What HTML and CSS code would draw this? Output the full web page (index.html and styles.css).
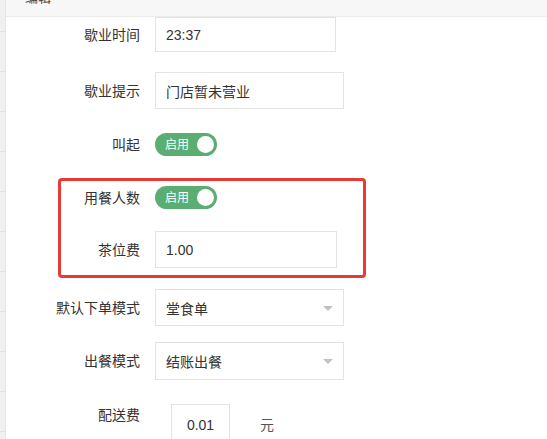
FILE: index.html
```html
<!DOCTYPE html>
<html lang="zh">
<head>
<meta charset="utf-8">
<title>编辑</title>
<link rel="stylesheet" href="styles.css">
</head>
<body>
<div class="page">
  <aside class="side"></aside>
  <main class="main">
    <header class="head"><span class="head-title">编辑</span></header>
    <div class="form">
      <div class="row r1">
        <label class="lbl">歇业时间</label>
        <div class="field w181">23:37</div>
      </div>
      <div class="row r2">
        <label class="lbl">歇业提示</label>
        <div class="field w189 h37">门店暂未营业</div>
      </div>
      <div class="row r3">
        <label class="lbl">叫起</label>
        <div class="switch"><span class="switch-text">启用</span><span class="knob"></span></div>
      </div>
      <div class="highlight">
        <div class="row r4">
          <label class="lbl lbl-in">用餐人数</label>
          <div class="switch"><span class="switch-text">启用</span><span class="knob"></span></div>
        </div>
        <div class="row r5">
          <label class="lbl lbl-in">茶位费</label>
          <div class="field w182 h37">1.00</div>
        </div>
      </div>
      <div class="row r6">
        <label class="lbl">默认下单模式</label>
        <div class="field select w189 h37">堂食单<span class="caret"></span></div>
      </div>
      <div class="row r7">
        <label class="lbl">出餐模式</label>
        <div class="field select w189 h38">结账出餐<span class="caret"></span></div>
      </div>
      <div class="row r8">
        <label class="lbl lbl-top">配送费</label>
        <div class="field small">0.01</div>
        <span class="unit">元</span>
      </div>
    </div>
  </main>
</div>
</body>
</html>
```
FILE: styles.css
```css
html, body {
  margin: 0;
  padding: 0;
  background: #ffffff;
  height: 100%;
  overflow: hidden;
}
body {
  font-family: "Liberation Sans", "Noto Sans CJK SC", sans-serif;
  font-size: 14px;
  color: #333333;
}
.page {
  display: flex;
  height: 439px;
}
.side {
  width: 5px;
  flex: none;
  background-color: #f0f0f0;
  background-image: repeating-linear-gradient(to bottom, transparent 0, transparent 31px, #e2e2e2 31px, #e2e2e2 32px, transparent 32px, transparent 40px);
  border-right: 1px solid #e6e6e6;
}
.main {
  flex: 1;
  min-width: 0;
}
.head {
  height: 16px;
  background: #f7f7f7;
  border-bottom: 1px solid #ebebeb;
  overflow: hidden;
  padding-left: 19px;
}
.head-title {
  display: block;
  margin-top: -12px;
  line-height: 20px;
  font-size: 13px;
  color: #444;
}
.form {
  display: flex;
  flex-direction: column;
}
.row {
  display: flex;
  align-items: center;
}
.lbl {
  width: 134px;
  padding-right: 15px;
  text-align: right;
  flex: none;
  color: #333;
  line-height: 20px;
}
.lbl-in {
  width: 79px;
}
.lbl-top {
  align-self: flex-start;
  margin-top: 1px;
}
.field {
  box-sizing: border-box;
  height: 35px;
  border: 1px solid #e3e3e3;
  display: flex;
  align-items: center;
  padding-left: 10px;
  color: #333;
  position: relative;
  flex: none;
}
.w181 { width: 181px; }
.w182 { width: 182px; }
.w189 { width: 189px; }
.h37 { height: 37px; }
.h38 { height: 38px; }
.r1 { margin-top: 0; }
.r2 { margin-top: 20px; }
.r3 { margin-top: 24px; }
.r5 { margin-top: 22px; }
.r6 { margin-top: 11px; }
.r7 { margin-top: 16px; }
.r8 { margin-top: 24px; }
.highlight {
  margin-top: 22px;
  margin-left: 52px;
  width: 302px;
  border: 3px solid #e63a35;
  border-radius: 4px;
  padding: 5px 0 7px 0;
}
.switch {
  box-sizing: border-box;
  width: 62px;
  height: 23px;
  border-radius: 12px;
  background: #5aae72;
  display: flex;
  align-items: center;
  justify-content: space-between;
  padding: 0 3px 0 10px;
  flex: none;
}
.switch-text {
  color: #ffffff;
  font-size: 12px;
  line-height: 14px;
}
.knob {
  width: 17px;
  height: 17px;
  border-radius: 50%;
  background: #ffffff;
}
.select .caret {
  position: absolute;
  right: 10px;
  top: 50%;
  margin-top: -2px;
  width: 0;
  height: 0;
  border-left: 5px solid transparent;
  border-right: 5px solid transparent;
  border-top: 5px solid #c2c2c2;
}
.small {
  width: 59px;
  height: 40px;
  margin-left: 16px;
  padding: 10px 0 0 0;
  justify-content: center;
  align-items: flex-start;
  border-bottom: none;
  line-height: 20px;
}
.unit {
  margin-left: 30px;
  align-self: flex-start;
  margin-top: 11px;
  line-height: 20px;
  color: #555;
}
```
